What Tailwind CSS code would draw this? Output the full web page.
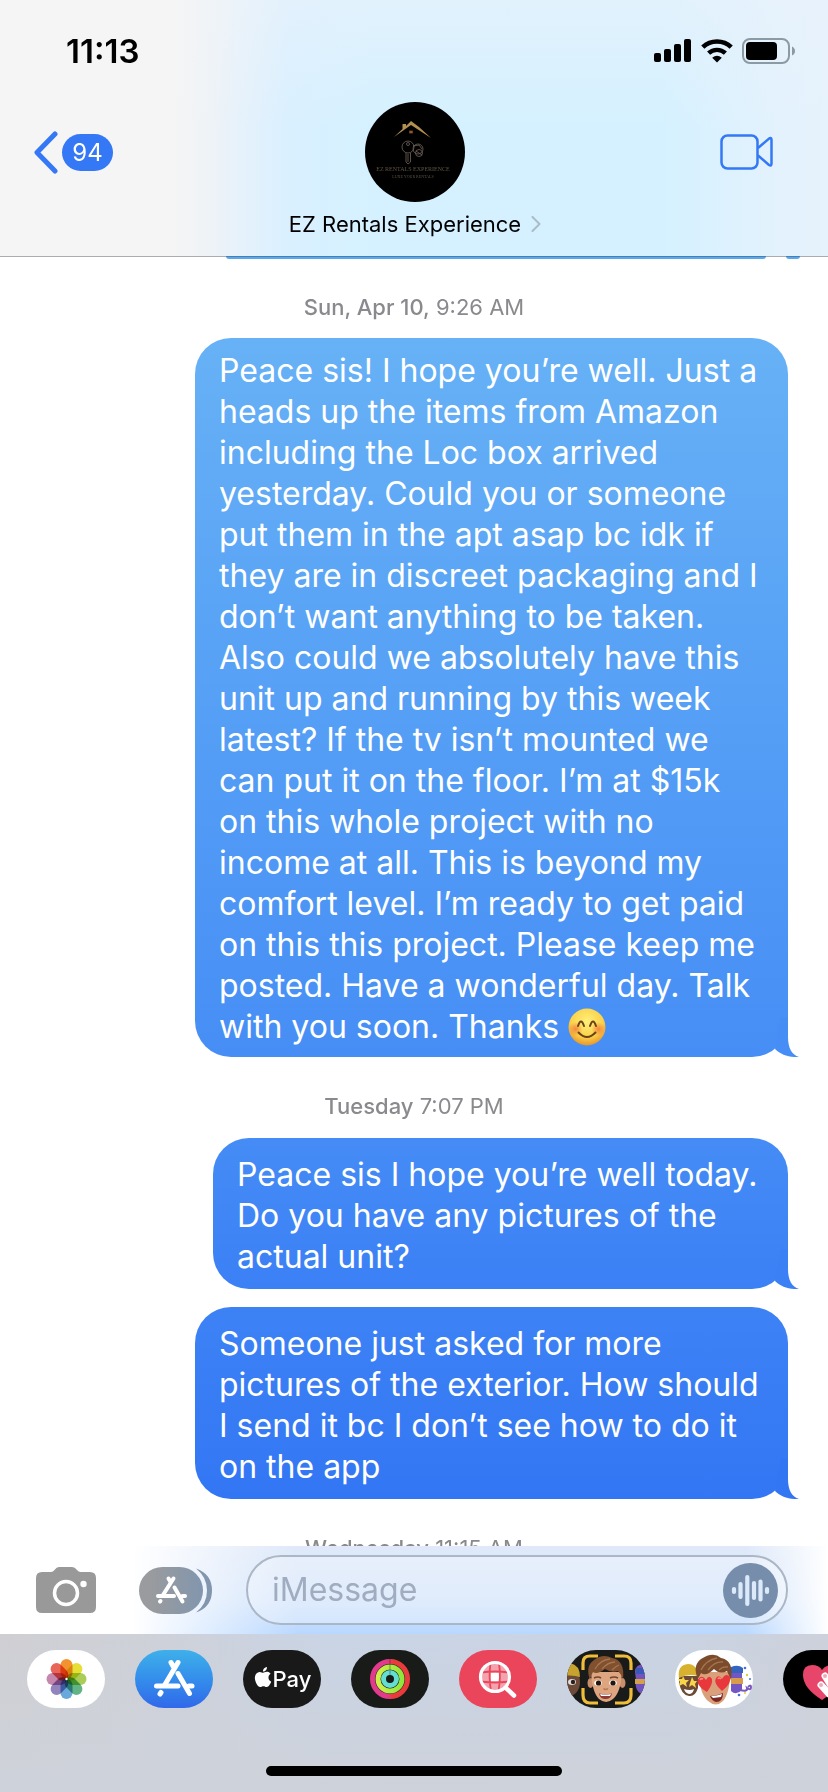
<!DOCTYPE html>
<html lang="en">
<head>
    <meta charset="UTF-8">
    <meta name="viewport" content="width=device-width, initial-scale=1.0">
    <title>Messages - EZ Rentals Experience</title>
    <script src="https://cdn.jsdelivr.net/npm/@tailwindcss/browser@4"></script>
</head>
<body class="bg-white font-[Inter,sans-serif] text-black">
<div class="flex flex-col h-screen overflow-hidden">

    <!-- Header -->
    <header class="shrink-0 bg-[linear-gradient(to_right,#f5f5f5_20%,#f5f5f500_35%),linear-gradient(to_bottom,#e9f2fb99,#ecf3fb00_50%),linear-gradient(to_right,#f5f5f5,#f3f4f5_14%,#e8eff6_22%,#dbefff_29%,#d5f1ff_45%,#d5f1ff_80%,#e3f2fd_94%,#e6f2fc)]">
        <!-- Status bar -->
        <div class="flex items-center justify-between h-[102px] pl-[66px] pr-8">
            <time class="text-[33px] leading-10 font-semibold">11:13</time>
            <div class="flex items-center gap-[9px]">
                <svg class="w-[38px] h-6" viewBox="0 0 38 24" aria-label="Signal">
                    <rect x="0" y="14" width="7" height="9" rx="2"/>
                    <rect x="10" y="10" width="7" height="13" rx="2"/>
                    <rect x="20" y="5" width="7" height="18" rx="2"/>
                    <rect x="30" y="0" width="7" height="23" rx="2"/>
                </svg>
                <svg class="w-8 h-6" viewBox="0 0 32 24" aria-label="Wi-Fi" fill="none" stroke="#000">
                    <path d="M1.8 8.2 A20.5 20.5 0 0 1 30.2 8.2" stroke-width="4.6"/>
                    <path d="M7.6 14.2 A12.2 12.2 0 0 1 24.4 14.2" stroke-width="4.4"/>
                    <path d="M16 23.6 L11.2 18.8 Q16 14.8 20.8 18.8 Z" fill="#000" stroke="none"/>
                </svg>
                <svg class="w-[54px] h-[26px]" viewBox="0 0 54 26" aria-label="Battery">
                    <rect x="1" y="1" width="46" height="24" rx="7" fill="none" stroke="#8c9aa3" stroke-width="2"/>
                    <rect x="4" y="4" width="31" height="18" rx="4"/>
                    <path d="M50 8.5 Q53 10 53 13 Q53 16 50 17.5 Z" fill="#8c9aa3"/>
                </svg>
            </div>
        </div>
        <!-- Contact -->
        <div class="grid grid-cols-3 items-start h-[154px] pl-[33px] pr-[55px]">
            <button class="flex items-center gap-1 mt-[29px] justify-self-start" aria-label="Back, 94 unread">
                <svg class="w-[25px] h-[43px]" viewBox="0 0 25 43" fill="none" stroke="#3478f6" stroke-width="5" stroke-linecap="round" stroke-linejoin="round">
                    <path d="M22 3 L4 21.5 L22 40"/>
                </svg>
                <span class="flex items-center justify-center w-[51px] h-[37px] rounded-full bg-[#3478f6] text-white text-2xl">94</span>
            </button>
            <button class="flex flex-col items-center justify-self-center whitespace-nowrap ml-6">
                <svg class="w-[100px] h-[100px]" viewBox="0 0 100 100" aria-hidden="true">
                    <circle cx="50" cy="50" r="50"/>
                    <path d="M29 35 L37.5 27 V22 H41 V24 L46 19 L54 25 L66 36 L46 23 Z" fill="#b2904f"/>
                    <path d="M44 28.5 h4 v3 h-4z M44 30 h4" fill="#c4733b" stroke="#000" stroke-width=".5"/>
                    <g fill="none" stroke="#74655a" stroke-width=".8">
                        <circle cx="43" cy="45" r="6"/>
                        <circle cx="43" cy="42" r="1.5"/>
                        <path d="M41 51 V60 L43 62 L45.5 60 V51 M43 52 V60"/>
                        <circle cx="53" cy="47" r="5"/>
                        <circle cx="54" cy="51" r="3.5"/>
                        <path d="M48 44 L54 43 L57 47 M51 49 L57 53"/>
                    </g>
                    <text x="48" y="69" text-anchor="middle" font-family="Liberation Serif, serif" font-size="6" fill="#5f5340">EZ RENTALS EXPERIENCE</text>
                    <text x="48" y="76" text-anchor="middle" font-family="Liberation Serif, serif" font-size="4" fill="#5f5340">LUXE YOUR RENTALS</text>
                </svg>
                <span class="flex items-center gap-[10px] mt-2 text-[22px] leading-7">EZ Rentals Experience
                    <svg class="w-[10px] h-4" viewBox="0 0 10 16" fill="none" stroke="#acbcc7" stroke-width="2" stroke-linecap="round" stroke-linejoin="round"><path d="M1.5 1 L8.5 8 L1.5 15"/></svg>
                </span>
            </button>
            <button class="justify-self-end mt-8" aria-label="FaceTime">
                <svg class="w-[53px] h-9" viewBox="0 0 53 36" fill="none" stroke="#3478f6" stroke-width="2.5" stroke-linejoin="round">
                    <rect x="1.500" y="1.5" width="36" height="33" rx="6"/>
                    <path d="M38 14 L49 4.6 Q51.5 3 51.5 6 V29.5 Q51.5 32.5 49 31 L38 21.5"/>
                </svg>
            </button>
        </div>
    </header>

    <!-- Messages -->
    <main class="flex-1 min-h-0 overflow-hidden flex flex-col">
        <!-- divider, with the end of the previous bubble showing under it -->
        <div class="shrink-0 flex h-[3px]">
            <div class="flex-1 h-px bg-[#a9adb1]"></div>
            <div class="w-[540px] rounded-b-full border-t border-[#4480b4] bg-[#5ba7ee]"></div>
            <div class="w-5 h-px bg-[#a9adb1]"></div>
            <div class="w-[14px] rounded-b-full border-t border-[#4480b4] bg-[#5ba7ee]"></div>
            <div class="w-7 h-px bg-[#a9adb1]"></div>
        </div>
        <p class="mt-[34px] text-center text-[22px] leading-7 text-[#8a8a8e]"><span class="font-medium">Sun, Apr 10,</span> 9:26 AM</p>

        <div class="relative self-end mt-[17px] mr-10 w-[593px] px-6 pt-3 pb-[10px] rounded-[36px] bg-linear-to-b from-[#67b1f6] to-[#468ef5] text-white text-[32px] leading-[41px] whitespace-nowrap">
            <p>Peace sis! I hope you’re well. Just a<br>heads up the items from Amazon<br>including the Loc box arrived<br>yesterday. Could you or someone<br>put them in the apt asap bc idk if<br>they are in discreet packaging and I<br>don’t want anything to be taken.<br>Also could we absolutely have this<br>unit up and running by this week<br>latest? If the tv isn’t mounted we<br>can put it on the floor. I’m at $15k<br>on this whole project with no<br>income at all. This is beyond my<br>comfort level. I’m ready to get paid<br>on this this project. Please keep me<br>posted. Have a wonderful day. Talk<br>with you soon. Thanks
                <svg class="inline-block w-[38px] h-[38px] align-[-8px]" viewBox="0 0 38 38" role="img" aria-label="smiling face">
                    <defs>
                        <radialGradient id="smile" cx=".5" cy=".35" r=".65"><stop offset="0" stop-color="#fff07a"/><stop offset=".65" stop-color="#fbd24a"/><stop offset="1" stop-color="#e9952c"/></radialGradient>
                        <radialGradient id="blush"><stop offset="0" stop-color="#f26b3c" stop-opacity=".75"/><stop offset="1" stop-color="#f26b3c" stop-opacity="0"/></radialGradient>
                    </defs>
                    <circle cx="19" cy="19" r="18.5" fill="url(#smile)"/>
                    <circle cx="7.5" cy="21" r="7" fill="url(#blush)"/>
                    <circle cx="30.5" cy="21" r="7" fill="url(#blush)"/>
                    <path d="M10 18 Q13 9 16 18 M22 18 Q25 9 28 18" fill="none" stroke="#6b431a" stroke-width="2" stroke-linecap="round"/>
                    <path d="M10.5 24.5 Q19 33.5 27.5 24.5" fill="none" stroke="#6b431a" stroke-width="2" stroke-linecap="round"/>
                </svg></p>
            <svg class="absolute -right-[11px] bottom-0 w-10 h-10 text-[#468ef5]" viewBox="0 0 40 40" fill="currentColor"><path d="M29 0 V20 C29 31 33 38 40 40 C30 40.5 22 38 16 32 L22 0 Z"/></svg>
        </div>

        <p class="mt-[35px] text-center text-[22px] leading-7 text-[#8a8a8e]"><span class="font-medium">Tuesday</span> 7:07 PM</p>

        <div class="relative self-end mt-[18px] mr-10 w-[575px] px-6 pt-4 pb-3 rounded-[36px] bg-linear-to-b from-[#458cf6] to-[#3b80f5] text-white text-[32px] leading-[41px] whitespace-nowrap">
            <p>Peace sis I hope you’re well today.<br>Do you have any pictures of the<br>actual unit?</p>
            <svg class="absolute -right-[11px] bottom-0 w-10 h-10 text-[#3b80f5]" viewBox="0 0 40 40" fill="currentColor"><path d="M29 0 V20 C29 31 33 38 40 40 C30 40.5 22 38 16 32 L22 0 Z"/></svg>
        </div>

        <div class="relative self-end mt-[18px] mr-10 w-[593px] px-6 pt-4 pb-3 rounded-[36px] bg-linear-to-b from-[#3d82f5] to-[#3376f4] text-white text-[32px] leading-[41px] whitespace-nowrap">
            <p>Someone just asked for more<br>pictures of the exterior. How should<br>I send it bc I don’t see how to do it<br>on the app</p>
            <svg class="absolute -right-[11px] bottom-0 w-10 h-10 text-[#3376f4]" viewBox="0 0 40 40" fill="currentColor"><path d="M29 0 V20 C29 31 33 38 40 40 C30 40.5 22 38 16 32 L22 0 Z"/></svg>
        </div>

        <p class="mt-[35px] text-center text-[22px] leading-7 text-[#8a8a8e]"><span class="font-medium">Wednesday</span> 11:15 AM</p>
    </main>

    <!-- Composer -->
    <form class="shrink-0 flex items-center h-[88px] pl-9 pr-10 bg-[linear-gradient(to_right,#ffffff_16%,#ffffff00_36%,#ffffff00_90%,#ffffff),linear-gradient(to_bottom,#dfe9f9,#d3e4fb_60%,#b9d8ff)]">
        <button type="button" class="shrink-0" aria-label="Camera">
            <svg class="w-[60px] h-[46px]" viewBox="0 0 60 46">
                <path d="M6 5 H15 Q17 5 18.5 3 Q20.5 0 23 0 H36 Q39 0 41 3 Q42.5 5 44.5 5 H54 Q60 5 60 11 V40 Q60 46 54 46 H6 Q0 46 0 40 V11 Q0 5 6 5 Z" fill="#999"/>
                <circle cx="30" cy="26" r="11.5" fill="none" stroke="#fff" stroke-width="3.5"/>
                <circle cx="47.5" cy="17" r="3.2" fill="#fff"/>
            </svg>
        </button>
        <button type="button" class="shrink-0 ml-[43px]" aria-label="Apps">
            <svg class="w-[73px] h-[47px]" viewBox="0 0 73 47">
                <defs><linearGradient id="pill"><stop offset=".2" stop-color="#999b9e"/><stop offset="1" stop-color="#8296ae"/></linearGradient></defs>
                <rect width="64" height="47" rx="23.5" fill="url(#pill)"/>
                <path d="M57 1.500 Q73 7 73 23.500 Q73 40 57 45.500 Q68 37 68 23.500 Q68 10 57 1.500 Z" fill="#8296ae"/>
                <g fill="none" stroke="#fff" stroke-width="4" stroke-linecap="round">
                    <path d="M29.5 11.5 L31.5 15 M34.5 11.5 L24 28"/>
                    <path d="M19 29 H35 M43.5 29 H46"/>
                    <path d="M35.5 20.5 L43.5 34.5 M21.5 34 L21 34.5"/>
                </g>
            </svg>
        </button>
        <div class="flex-1 min-w-0 flex items-center h-[70px] ml-[34px] pl-6 pr-2 rounded-full border-2 border-[#abb7c6] bg-white/30">
            <input type="text" aria-label="Message" placeholder="iMessage" class="flex-1 min-w-0 text-[32px] leading-10 outline-none placeholder:text-[#a0adc0]">
            <button type="button" class="shrink-0" aria-label="Record audio">
                <svg class="w-[55px] h-[55px]" viewBox="0 0 55 55">
                    <circle cx="27.5" cy="27.5" r="27.5" fill="#768eab"/>
                    <path d="M11 26 V29 M17.5 21 V34 M24.3 14 V41 M31 20 V35 M37.5 18.5 V36.5 M44 26 V29" stroke="#dbe9fa" stroke-width="4.2" stroke-linecap="round"/>
                </svg>
            </button>
        </div>
    </form>

    <!-- App drawer -->
    <footer class="shrink-0 bg-[linear-gradient(to_bottom,#ced2da00,#ced2da),linear-gradient(to_right,#cfcfd3,#ced1d9_20%,#c9d4e5_40%,#c9d3e3_80%,#cdd1db)]">
        <nav class="flex gap-[30px] pt-4 pl-[27px] overflow-hidden">
            <button class="shrink-0 w-[78px] h-[58px] rounded-full bg-white" aria-label="Photos">
                <svg class="w-[78px] h-[58px]" viewBox="0 0 78 58">
                    <rect class="mix-blend-multiply" x="33.5" y="9" width="12" height="20" rx="6" fill="#f3932f"/>
                    <rect class="mix-blend-multiply" x="33.5" y="9" width="12" height="20" rx="6" fill="#e5df38" transform="rotate(45 39.5 29)"/>
                    <rect class="mix-blend-multiply" x="33.5" y="9" width="12" height="20" rx="6" fill="#a9cd58" transform="rotate(90 39.5 29)"/>
                    <rect class="mix-blend-multiply" x="33.5" y="9" width="12" height="20" rx="6" fill="#62b486" transform="rotate(135 39.5 29)"/>
                    <rect class="mix-blend-multiply" x="33.5" y="9" width="12" height="20" rx="6" fill="#68a8da" transform="rotate(180 39.5 29)"/>
                    <rect class="mix-blend-multiply" x="33.5" y="9" width="12" height="20" rx="6" fill="#9484bd" transform="rotate(225 39.5 29)"/>
                    <rect class="mix-blend-multiply" x="33.5" y="9" width="12" height="20" rx="6" fill="#c587ae" transform="rotate(270 39.5 29)"/>
                    <rect class="mix-blend-multiply" x="33.5" y="9" width="12" height="20" rx="6" fill="#e86558" transform="rotate(315 39.5 29)"/>
                    <circle cx="39.5" cy="29" r="1.2" fill="#fff"/>
                </svg>
            </button>
            <button class="shrink-0 w-[78px] h-[58px] rounded-full bg-linear-to-b from-[#3fb0ea] to-[#3168ea]" aria-label="App Store">
                <svg class="w-[78px] h-[58px]" viewBox="0 0 78 58" fill="none" stroke="#fff" stroke-width="5" stroke-linecap="round">
                    <path d="M36 12.5 L38.5 17 M43 12.5 L30 34.5"/>
                    <path d="M21.5 36 H43 M54 36 H57"/>
                    <path d="M43 23.5 L54.5 43.5 M26 42.5 L25 44"/>
                </svg>
            </button>
            <button class="shrink-0 flex items-center justify-center w-[78px] h-[58px] rounded-full bg-[#181918] text-white">
                <svg class="w-5 h-5 -mt-1" viewBox="0 0 24 24" fill="currentColor" aria-label="Apple"><path d="M12.152 6.896c-.948 0-2.415-1.078-3.960-1.040-2.040.027-3.910 1.183-4.961 3.014-2.117 3.675-.546 9.103 1.519 12.090 1.013 1.454 2.208 3.090 3.792 3.039 1.520-.065 2.090-.987 3.935-.987 1.831 0 2.350.987 3.960.948 1.637-.026 2.676-1.480 3.676-2.948 1.156-1.688 1.636-3.325 1.662-3.415-.039-.013-3.182-1.221-3.220-4.857-.026-3.040 2.480-4.494 2.597-4.559-1.429-2.090-3.623-2.324-4.390-2.376-2-.156-3.675 1.090-4.610 1.090zM15.530 3.830c.843-1.012 1.400-2.427 1.245-3.830-1.207.052-2.662.805-3.532 1.818-.780.896-1.454 2.338-1.273 3.714 1.338.104 2.715-.688 3.559-1.701"/></svg>
                <span class="text-[22px] leading-7 font-medium">Pay</span>
            </button>
            <button class="shrink-0 w-[78px] h-[58px] rounded-full bg-[#191b19]" aria-label="Fitness">
                <svg class="w-[78px] h-[58px]" viewBox="0 0 78 58" fill="none" stroke-width="5">
                    <defs>
                        <linearGradient id="ringA"><stop offset=".4" stop-color="#e23a8c"/><stop offset=".6" stop-color="#ea3b3c"/></linearGradient>
                        <linearGradient id="ringB"><stop offset="0" stop-color="#d3f04a"/><stop offset="1" stop-color="#8fe63c"/></linearGradient>
                    </defs>
                    <circle cx="39" cy="29" r="17.5" stroke="url(#ringA)"/>
                    <circle cx="39" cy="29" r="12" stroke="url(#ringB)"/>
                    <circle cx="39" cy="29" r="6.5" stroke="#62dfd2"/>
                    <path d="M39 9 V14 M39 14.5 V19 M39 20 V25" stroke="#191b19" stroke-opacity=".4" stroke-width="1"/>
                </svg>
            </button>
            <button class="shrink-0 w-[78px] h-[58px] rounded-full bg-[#ea455b]" aria-label="#images">
                <svg class="w-[78px] h-[58px]" viewBox="0 0 78 58">
                    <circle cx="36" cy="27" r="14" fill="#f4a3ae"/>
                    <path d="M31.5 22.5 H40 V31.5 H31.5 Z" fill="#fff"/>
                    <path d="M31.5 13 Q29.5 27 32 41 M40 13 Q42 27 39.5 41 M22 22.5 Q36 20.5 50 22.5 M22 31.5 Q36 33.5 50 31.5" fill="none" stroke="#ea455b" stroke-width="1.8"/>
                    <circle cx="36" cy="27" r="14.5" fill="none" stroke="#fff" stroke-width="3.2"/>
                    <path d="M47 38 L55 45.5" stroke="#fff" stroke-width="4.5" stroke-linecap="round"/>
                </svg>
            </button>
            <button class="shrink-0 w-[78px] h-[58px] rounded-full bg-[#191b1b] overflow-hidden" aria-label="Memoji">
                <svg class="w-[78px] h-[58px]" viewBox="0 0 78 58">
                    <ellipse cx="2" cy="32" rx="11" ry="14" fill="#6d4937"/>
                    <path d="M-10 27 Q-8 12 3 13 Q13 15 13 27 Q4 24 -10 27 Z" fill="#c7a22e"/>
                    <ellipse cx="5" cy="32" rx="4" ry="3" fill="#ddd"/><circle cx="6" cy="32" r="2.2" fill="#2a211c"/>
                    <path d="M68 22 Q68 14 78 14 V45 Q67 43 69 30 Z" fill="#7254bf"/>
                    <path d="M69 18 H80 V24 H69 Z" fill="#3a58b8"/><path d="M68 29 H80 V34 H68 Z" fill="#d5a04c"/>
                    <path d="M16 20 V13 Q16 6 23 6 H31 M48 6 H57 Q64 6 64 13 V20 M64 38 V45 Q64 53 57 53 H48 M31 53 H23 Q16 53 16 45 V38" fill="none" stroke="#efbd3a" stroke-width="3.2"/>
                    <ellipse cx="23.5" cy="33" rx="3" ry="5" fill="#c98e6c"/><ellipse cx="55.5" cy="33" rx="3" ry="5" fill="#c98e6c"/>
                    <path d="M24 22 Q25 42 32 49 Q39 55 46 49 Q54 42 55 22 Z" fill="#dda680"/>
                    <path d="M23 30 Q18 16 27 10 Q36 3 45 8 Q58 10 56 29 Q54 24 51 21 Q44 23 38 19 Q30 25 26 22 Q24 25 23 30 Z" fill="#80502f"/>
                    <path d="M28 19 Q33 10 43 9 M35 19 Q41 12 48 12 M45 20 Q49 16 52 15" fill="none" stroke="#a77550" stroke-width="1.3"/>
                    <path d="M27 28 Q31 26 34 28 M43 28 Q47 26 51 28" fill="none" stroke="#70472d" stroke-width="1.6"/>
                    <ellipse cx="31" cy="33" rx="3.8" ry="2.8" fill="#fff"/><ellipse cx="46" cy="33" rx="3.8" ry="2.8" fill="#fff"/>
                    <circle cx="31.5" cy="33" r="2.6" fill="#24160f"/><circle cx="46" cy="33" r="2.6" fill="#24160f"/>
                    <path d="M36.5 38.5 Q38.5 40.5 41 38.5" fill="none" stroke="#b67653" stroke-width="1.5"/>
                    <path d="M32 43.5 Q38 44.5 45 43.5 Q44 49 38.5 49 Q33 49 32 43.5 Z" fill="#8c3c35"/><path d="M33 44 Q38 45 44 44 L43 46 H34 Z" fill="#fff"/>
                </svg>
            </button>
            <button class="shrink-0 w-[78px] h-[58px] rounded-full bg-white" aria-label="Memoji stickers">
                <svg class="w-[78px] h-[58px]" viewBox="0 0 78 58">
                    <path d="M4 26 H23 V38 Q20 47 14 46 Q6 45 4 32 Z" fill="#6d4937"/>
                    <path d="M4 28 Q2 15 13 14 Q22 14 23 26 Q13 23 4 28 Z" fill="#d8b12e"/>
                    <path d="M8 26 L10 30 L14 30 L11 33 L12 37 L8 34 L4 36 L5 32 L3 29 L7 29 Z M17 27 L19 31 L22 31 L20 34 L21 38 L17 35 L14 37 L15 33 Z" fill="#f8d64a"/>
                    <path d="M9 39 Q15 41 19 39 Q18 44 14 44 Q10 43 9 39 Z" fill="#fff"/>
                    <path d="M56 18 H67 V40 Q61 46 56 41 Z" fill="#7456c2"/><path d="M56 17 Q63 14 68 18 V23 H56 Z" fill="#3464bd"/>
                    <path d="M56 28 H68 V34 H56 Z" fill="#d99c48"/><path d="M65 40 Q73 42 72 38 Q76 41 76 37 Q76 34 73 37" fill="none" stroke="#7859c0" stroke-width="2"/>
                    <g fill="#e8c940"><circle cx="72" cy="25" r="1.2"/><circle cx="70" cy="43" r="1"/></g>
                    <g fill="#456de0"><circle cx="70" cy="18" r="1.3"/><circle cx="75" cy="29" r="1"/><circle cx="64" cy="45" r="1.3"/></g>
                    <path d="M24 22 Q24 43 33 51 Q41 58 48 51 Q55 43 55 22 Z" fill="#d9a07b"/>
                    <path d="M23 29 Q17 16 26 9 Q38 1 46 8 Q59 10 56 30 L52 21 Q45 25 39 19 Q31 27 26 23 Z" fill="#7b4b2b"/>
                    <path d="M26 20 Q31 10 42 8 M33 20 Q40 11 48 12 M44 20 Q48 16 53 17" fill="none" stroke="#a77550" stroke-width="1.3"/>
                    <path d="M35 46 Q42 46 48 43 Q48 52 41 52 Q37 51 35 46 Z" fill="#7b2723"/><path d="M36 46 Q42 46 47 44 L46 47 L38 48 Z" fill="#fff"/>
                    <path d="M32 42 Q20 35 23 29 Q27 24 31 30 Q34 24 37 29 Q38 34 32 42 Z M47 41 Q38 33 41 28 Q44 24 47 29 Q51 22 55 27 Q57 33 47 41 Z" fill="#e8383b"/>
                    <path d="M25 30 Q26 28 28 29 M43 29 Q44 27 46 29" fill="none" stroke="#ff8b82" stroke-width="1.5"/>
                </svg>
            </button>
            <button class="shrink-0 w-[78px] h-[58px] rounded-full bg-black" aria-label="Digital Touch">
                <svg class="w-[78px] h-[58px]" viewBox="0 0 78 58">
                    <path d="M39 50 Q20 38 20 25 Q20 15 29 15 Q36 15 39 20 Q42 15 49 15 Q58 15 58 25 Q58 38 39 50 Z" fill="#e8456b"/>
                    <path d="M42 26 L47 34 M38 35 L46 44" stroke="#fff" stroke-width="7" stroke-linecap="round"/>
                    <circle cx="42" cy="26" r="2" fill="#f3a8b8"/><circle cx="38" cy="35" r="2" fill="#f3a8b8"/>
                </svg>
            </button>
        </nav>
        <div class="mx-auto mt-[58px] mb-4 h-[10px] w-[296px] rounded-full bg-black"></div>
    </footer>
</div>
</body>
</html>
